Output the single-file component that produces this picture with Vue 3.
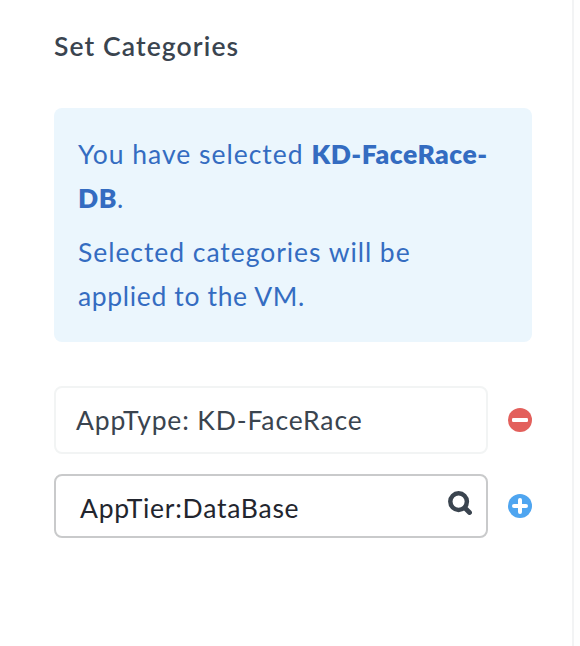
<script setup>
import { ref } from 'vue'

const vmName = 'KD-FaceRace-DB'
const applied = ref('AppType: KD-FaceRace')
const query = ref('AppTier:DataBase')
</script>

<template>
  <main class="panel">
    <h1 class="title">Set Categories</h1>
    <section class="notice">
      <p class="selection">You have selected <strong>{{ vmName }}</strong>.</p>
      <p class="detail">Selected categories will be <span class="tail">applied to the VM.</span></p>
    </section>
    <div class="row">
      <div class="field assigned"><span>{{ applied }}</span></div>
      <button class="action" aria-label="Remove category">
        <svg viewBox="0 0 24 24" width="24" height="24">
          <circle cx="12" cy="12" r="12" fill="#e3605c" />
          <rect x="4" y="10" width="16" height="4" rx="1.2" fill="#fff" />
        </svg>
      </button>
    </div>
    <div class="row search-row">
      <div class="field search">
        <span>{{ query }}</span>
        <svg class="magnifier" viewBox="0 0 24 24" width="24" height="24" fill="none" stroke="#3a444f">
          <circle cx="10.6" cy="10.6" r="8.3" stroke-width="4.5" />
          <path d="M17 17L21.5 21.5" stroke-width="4.8" stroke-linecap="round" />
        </svg>
      </div>
      <button class="action" aria-label="Add category">
        <svg viewBox="0 0 24 24" width="24" height="24">
          <circle cx="12" cy="12" r="12" fill="#4fa5f0" />
          <path d="M12 6V18M6 12H18" stroke="#fff" stroke-width="4" stroke-linecap="round" />
        </svg>
      </button>
    </div>
  </main>
</template>

<style>
body {
  margin: 0;
  background: #fefefe;
}
</style>

<style scoped>
.panel {
  box-sizing: border-box;
  width: 574px;
  height: 646px;
  padding: 24px 40px 0 54px;
  border-right: 2px solid #f2f3f4;
  background: #fff;
  font-family: Lato, "Open Sans", sans-serif;
  font-size: 26.5px;
  line-height: 44px;
  color: #3a444f;
}
.title {
  margin: 0;
  font-size: 26.5px;
  font-weight: 600;
  letter-spacing: 1.1px;
}
.notice {
  box-sizing: border-box;
  width: 478px;
  margin-top: 40px;
  padding: 24px;
  border-radius: 8px;
  background: #ebf6fd;
  color: #346cc1;
}
.notice p {
  margin: 0;
}
.selection {
  letter-spacing: 1px;
}
.selection strong {
  font-weight: 800;
  letter-spacing: 0.5px;
}
.notice .detail {
  width: 400px;
  margin-top: 10px;
  letter-spacing: 0.95px;
}
.tail {
  letter-spacing: 0.65px;
}
.row {
  display: flex;
  align-items: center;
  gap: 20px;
  margin-top: 44px;
}
.search-row {
  margin-top: 20px;
}
.field {
  box-sizing: border-box;
  display: flex;
  align-items: center;
  width: 434px;
  border-radius: 8px;
}
.assigned {
  height: 68px;
  padding: 0 20px;
  border: 2px solid #f2f4f4;
  letter-spacing: 0.85px;
}
.search {
  height: 64px;
  justify-content: space-between;
  padding: 4px 14px 0 24px;
  border: 2px solid #c9cacb;
  color: #22252e;
  letter-spacing: 0.75px;
}
.magnifier {
  margin-bottom: 10px;
}
.action {
  display: flex;
  padding: 0;
  border: 0;
  background: none;
}
</style>
